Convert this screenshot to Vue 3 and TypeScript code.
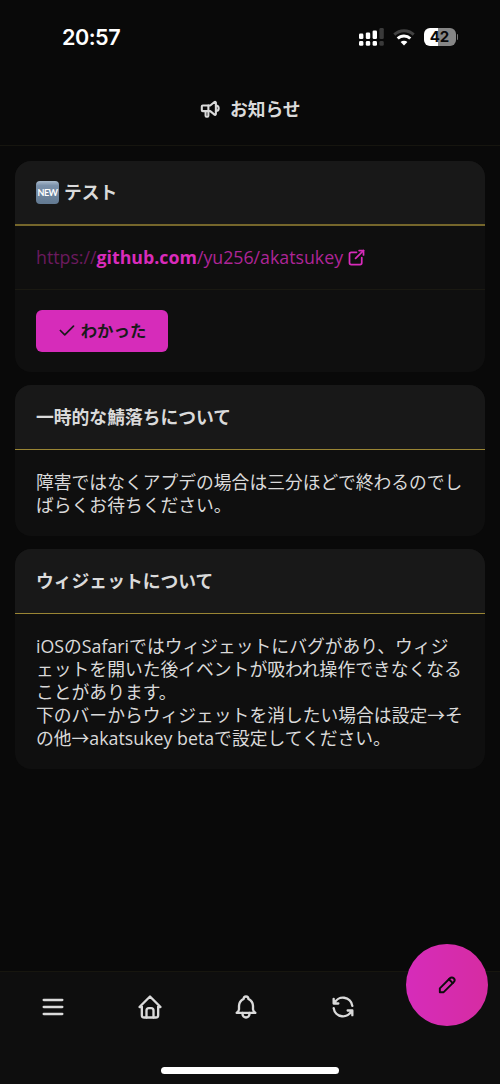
<script setup lang="ts">
interface Notice {
  title: string
  lines: string[]
  isNew?: boolean
}

const notices: Notice[] = [
  { title: 'テスト', lines: [], isNew: true },
  {
    title: '一時的な鯖落ちについて',
    lines: ['障害ではなくアプデの場合は三分ほどで終わるのでし', 'ばらくお待ちください。'],
  },
  {
    title: 'ウィジェットについて',
    lines: [
      'iOSのSafariではウィジェットにバグがあり、ウィジ',
      'ェットを開いた後イベントが吸われ操作できなくなる',
      'ことがあります。',
      '下のバーからウィジェットを消したい場合は設定→そ',
      'の他→akatsukey betaで設定してください。',
    ],
  },
]

const navIcons: { name: string; paths: string[] }[] = [
  { name: 'menu', paths: ['M4 6h16', 'M4 12h16', 'M4 18h16'] },
  {
    name: 'home',
    paths: [
      'M5 12H3l9-9 9 9h-2',
      'M5 12v7a2 2 0 0 0 2 2h10a2 2 0 0 0 2-2v-7',
      'M9 21v-6a2 2 0 0 1 2-2h2a2 2 0 0 1 2 2v6',
    ],
  },
  {
    name: 'notifications',
    paths: [
      'M10 5a2 2 0 0 1 4 0a7 7 0 0 1 4 6v3a4 4 0 0 0 2 3h-16a4 4 0 0 0 2-3v-3a7 7 0 0 1 4-6',
      'M9 17v1a3 3 0 0 0 6 0v-1',
    ],
  },
  {
    name: 'reload',
    paths: ['M20 11a8.1 8.1 0 0 0-15.5-2m-.5-4v4h4', 'M4 13a8.1 8.1 0 0 0 15.5 2m.5 4v-4h-4'],
  },
]
</script>

<template>
  <div class="screen">
    <div class="status">
      <span class="clock">20:57</span>
      <div class="indicators">
        <svg class="signal" width="26" height="18" viewBox="0 0 26 18">
          <g fill="#fff">
            <rect x="0" y="5.6" width="4.4" height="5.4" rx="1.3" />
            <rect x="6.8" y="4.4" width="4.4" height="6.6" rx="1.3" />
            <rect x="13.6" y="2.4" width="4.4" height="8.6" rx="1.3" />
            <rect x="0" y="13" width="4.4" height="4.8" rx="1.4" />
            <rect x="6.8" y="13" width="4.4" height="4.8" rx="1.4" />
            <rect x="13.6" y="13" width="4.4" height="4.8" rx="1.4" />
          </g>
          <g fill="#3a3a3a">
            <rect x="20.4" y="0" width="4.4" height="11" rx="1.3" />
            <rect x="20.4" y="13" width="4.4" height="4.8" rx="1.4" />
          </g>
        </svg>
        <svg class="wifi" width="22" height="17" viewBox="0 0 22 17">
          <g fill="none" stroke-width="2.9">
            <path d="M1.3 5.6a14 14 0 0 1 19.4 0" stroke="#424242" />
            <path d="M4.7 9.6a8.8 8.8 0 0 1 12.6 0" stroke="#fff" />
          </g>
          <path d="M11 16.5L7.6 13.1a4.8 4.8 0 0 1 6.8 0z" fill="#fff" />
        </svg>
        <div class="battery"><span>42</span></div>
        <i class="battery-tip"></i>
      </div>
    </div>

    <header class="page-title">
      <svg class="icon" width="22.5" height="22.5" viewBox="0 0 24 24">
        <path d="M18 8a3 3 0 0 1 0 6" />
        <path d="M10 8v11a1 1 0 0 1-1 1h-1a1 1 0 0 1-1-1v-5" />
        <path d="M12 8l4.524-3.77a.9.9 0 0 1 1.476.692v12.156a.9.9 0 0 1-1.476.692l-4.524-3.77h-8a1 1 0 0 1-1-1v-4a1 1 0 0 1 1-1h8" />
      </svg>
      <span>お知らせ</span>
    </header>

    <main class="notices">
      <section v-for="n in notices" :key="n.title" class="card" :class="{ unread: n.isNew }">
        <h2 class="card-title">
          <span v-if="n.isNew" class="new-badge"><b>NEW</b></span>
          <span>{{ n.title }}</span>
        </h2>
        <template v-if="n.isNew">
          <div class="card-body">
            <a class="link"><span class="scheme">https://</span><span class="host">github.com</span><span class="path">/yu256/akatsukey</span><svg class="icon" width="21" height="21" viewBox="0 0 24 24">
              <path d="M12 6h-6a2 2 0 0 0-2 2v10a2 2 0 0 0 2 2h10a2 2 0 0 0 2-2v-6" />
              <path d="M11 13l9-9" />
              <path d="M15 4h5v5" />
            </svg></a>
          </div>
          <div class="card-footer">
            <button class="confirm">
              <svg class="icon" width="21" height="21" viewBox="0 0 24 24"><path d="M5 12l5 5l10-10" /></svg>
              <span>わかった</span>
            </button>
          </div>
        </template>
        <div v-else class="card-body text">
          <p v-for="line in n.lines" :key="line">{{ line }}</p>
        </div>
      </section>
    </main>

    <nav class="nav">
      <div class="nav-items">
        <svg v-for="i in navIcons" :key="i.name" class="icon" width="28" height="28" viewBox="0 0 24 24">
          <path v-for="d in i.paths" :key="d" :d="d" />
        </svg>
      </div>
      <button class="post">
        <svg class="icon" width="23" height="23" viewBox="0 0 24 24">
          <path d="M4 20h4l10.5-10.5a1.5 1.5 0 0 0-4-4l-10.5 10.5v4" />
          <path d="M13.5 6.5l4 4" />
        </svg>
      </button>
      <div class="home-indicator"></div>
    </nav>
  </div>
</template>

<style>
body {
  margin: 0;
  background: #090909;
}
</style>

<style scoped>
.screen {
  display: flex;
  flex-direction: column;
  width: 500px;
  height: 1084px;
  overflow: hidden;
  background: #090909;
  color: #dadada;
  font-family: "Open Sans", "Noto Sans CJK JP", sans-serif;
  font-size: 17.75px;
  line-height: 23px;
}

.icon {
  display: block;
  flex: none;
  fill: none;
  stroke: currentColor;
  stroke-width: 2;
  stroke-linecap: round;
  stroke-linejoin: round;
}

.status {
  display: flex;
  flex: none;
  justify-content: space-between;
  box-sizing: border-box;
  height: 74px;
  padding: 0 42px 0 62px;
}

.clock {
  font: 600 21.6px/75px Inter, sans-serif;
  letter-spacing: -0.5px;
  color: #fff;
}

.indicators {
  display: flex;
  align-items: center;
}

.wifi {
  margin: 0 9px 0 8px;
}

.battery {
  width: 32px;
  height: 18px;
  border-radius: 6px;
  background: linear-gradient(90deg, #fff 43%, #868686 43%);
  color: #090909;
  font: 700 15px/18px Inter, sans-serif;
  text-align: center;
}

.battery-tip {
  width: 1.5px;
  height: 6px;
  margin-left: 1px;
  border-radius: 0 2px 2px 0;
  background: #777;
}

.page-title {
  display: flex;
  flex: none;
  align-items: center;
  justify-content: center;
  gap: 8px;
  box-sizing: border-box;
  height: 72px;
  border-bottom: 1px solid #16150f;
  font-weight: 700;
}

.page-title .icon {
  stroke-width: 2.2;
}

.notices {
  display: flex;
  flex: 1;
  flex-direction: column;
  gap: 13px;
  padding: 15px 15px 0;
}

.card {
  flex: none;
  overflow: hidden;
  border-radius: 16px;
  background: #0f0f0f;
}

.card-title {
  display: flex;
  align-items: center;
  gap: 5px;
  box-sizing: border-box;
  height: 65px;
  margin: 0;
  padding: 0 21px;
  border-bottom: 1px solid #9a8534;
  background: #181818;
  font-size: 17.8px;
  font-weight: 700;
}

.unread .card-title {
  border-bottom: 2px solid #75662b;
}

.new-badge {
  display: flex;
  align-items: center;
  justify-content: center;
  width: 23px;
  height: 23px;
  border-radius: 4px;
  background: linear-gradient(#a9bacb, #7b91aa 20%, #627991);
  color: #fff;
}

.new-badge b {
  font: 700 9px/23px Lato, sans-serif;
  letter-spacing: -0.6px;
}

.card-body {
  padding: 20px 21px;
}

.card-body.text {
  padding: 21px 21px 19px;
}

.card-body p {
  margin: 0;
  font-size: 17.8px;
  font-weight: 380;
  white-space: nowrap;
}

.link {
  display: flex;
  align-items: center;
  height: 23px;
  color: #d92bbb;
}

.scheme {
  color: #6b1a5e;
}

.host {
  font-weight: 700;
}

.path {
  color: #ae2597;
}

.link .icon {
  margin-left: 3px;
}

.card-footer {
  padding: 20px 21px;
  border-top: 1px solid #1a1912;
}

.confirm {
  display: flex;
  align-items: center;
  justify-content: center;
  gap: 4px;
  box-sizing: border-box;
  width: 132px;
  height: 42px;
  padding: 0 2px 2px 0;
  border: 0;
  border-radius: 6px;
  background: #d62cba;
  color: #1a1a1a;
  font: inherit;
  font-size: 16.4px;
  font-weight: 700;
}

.nav {
  position: relative;
  flex: none;
  box-sizing: border-box;
  height: 113px;
  border-top: 1px solid #17160f;
  background: #0e0e0e;
}

.nav-items {
  display: flex;
  gap: 68.4px;
  padding: 21px 0 0 39.4px;
}

.post {
  position: absolute;
  top: -28px;
  right: 12px;
  display: flex;
  align-items: center;
  justify-content: center;
  box-sizing: border-box;
  width: 82px;
  height: 82px;
  padding: 0 0 2px;
  border: 0;
  border-radius: 50%;
  background: linear-gradient(90deg, #d62cba, #d62ca2);
  color: #0d0d0d;
}

.home-indicator {
  position: absolute;
  bottom: 10px;
  left: 161px;
  width: 178px;
  height: 7px;
  border-radius: 4px;
  background: #fff;
}
</style>
